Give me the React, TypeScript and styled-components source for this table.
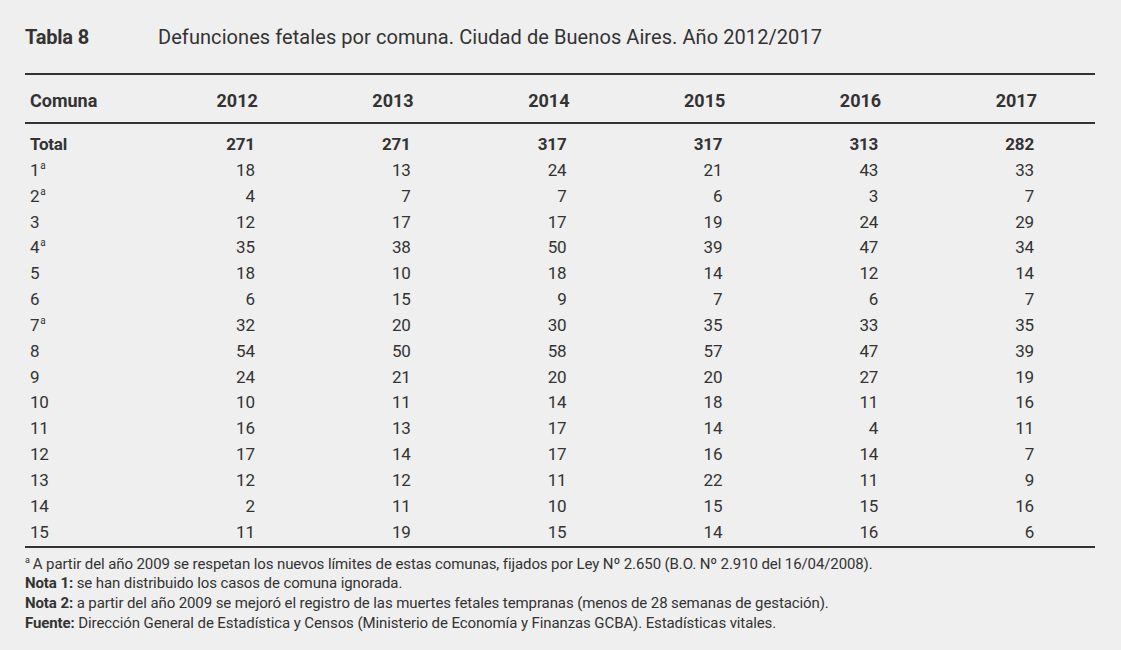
import React from "react";
import styled, { createGlobalStyle } from "styled-components";

const Global = createGlobalStyle`
  html, body { margin: 0; padding: 0; background: #efefef; }
  body { font-family: Roboto, "Open Sans", "Liberation Sans", sans-serif; color: #333; }
`;

const Page = styled.div`
  width: 1070px;
  padding: 24px 26px 0 25px;
  background: #efefef;
  min-height: 650px;
  box-sizing: content-box;
`;

const TitleBar = styled.div`
  display: flex;
  align-items: baseline;
  height: 49px;
  padding-top: 1px;
  box-sizing: border-box;
  font-size: 20px;
`;

const TableNo = styled.span`
  width: 133px;
  font-weight: 700;
  letter-spacing: -0.2px;
`;

const TitleText = styled.span`
  font-weight: 400;
  letter-spacing: 0.07px;
`;

const Table = styled.div`
  display: grid;
  grid-template-columns: 135px repeat(6, 1fr);
  border-top: 2px solid #333;
  border-bottom: 2px solid #333;
`;

const HeadCell = styled.div<{ $first?: boolean }>`
  height: 49px;
  border-bottom: 2px solid #333;
  display: flex;
  align-items: center;
  padding-top: 3px;
  box-sizing: border-box;
  justify-content: ${(p) => (p.$first ? "flex-start" : "flex-end")};
  padding-left: ${(p) => (p.$first ? "5px" : "0")};
  padding-right: ${(p) => (p.$first ? "0" : "58px")};
  font-size: 18px;
  font-weight: 700;
  letter-spacing: 0;
`;

const Cell = styled.div<{ $first?: boolean; $bold?: boolean; $top?: boolean }>`
  height: 25.85px;
  line-height: 25.85px;
  margin-top: ${(p) => (p.$top ? "8px" : "0")};
  text-align: ${(p) => (p.$first ? "left" : "right")};
  padding-left: ${(p) => (p.$first ? "5px" : "0")};
  padding-right: ${(p) => (p.$first ? "0" : "61px")};
  font-size: 17px;
  font-weight: ${(p) => (p.$bold ? 700 : 400)};
  letter-spacing: -0.2px;
`;

const Sup = styled.sup`
  font-size: 10px;
  line-height: 0;
  vertical-align: 7px;
  margin-left: 1px;
`;

const Notes = styled.div`
  padding-top: 7px;
  font-size: 15px;
  line-height: 19.7px;
  letter-spacing: -0.1px;
`;

const NoteLine = styled.div``;

const NoteSup = styled.sup`
  font-size: 9px;
  line-height: 0;
  vertical-align: 6px;
  margin-right: 3px;
`;

const years = ["2012", "2013", "2014", "2015", "2016", "2017"];

const rows: { label: string; sup?: boolean; bold?: boolean; v: number[] }[] = [
  { label: "Total", bold: true, v: [271, 271, 317, 317, 313, 282] },
  { label: "1", sup: true, v: [18, 13, 24, 21, 43, 33] },
  { label: "2", sup: true, v: [4, 7, 7, 6, 3, 7] },
  { label: "3", v: [12, 17, 17, 19, 24, 29] },
  { label: "4", sup: true, v: [35, 38, 50, 39, 47, 34] },
  { label: "5", v: [18, 10, 18, 14, 12, 14] },
  { label: "6", v: [6, 15, 9, 7, 6, 7] },
  { label: "7", sup: true, v: [32, 20, 30, 35, 33, 35] },
  { label: "8", v: [54, 50, 58, 57, 47, 39] },
  { label: "9", v: [24, 21, 20, 20, 27, 19] },
  { label: "10", v: [10, 11, 14, 18, 11, 16] },
  { label: "11", v: [16, 13, 17, 14, 4, 11] },
  { label: "12", v: [17, 14, 17, 16, 14, 7] },
  { label: "13", v: [12, 12, 11, 22, 11, 9] },
  { label: "14", v: [2, 11, 10, 15, 15, 16] },
  { label: "15", v: [11, 19, 15, 14, 16, 6] },
];

export default function App() {
  return (
    <Page>
      <Global />
      <TitleBar>
        <TableNo>Tabla 8</TableNo>
        <TitleText>Defunciones fetales por comuna. Ciudad de Buenos Aires. Año 2012/2017</TitleText>
      </TitleBar>
      <Table>
        <HeadCell $first>Comuna</HeadCell>
        {years.map((y) => (
          <HeadCell key={y}>{y}</HeadCell>
        ))}
        {rows.map((r, i) => (
          <React.Fragment key={r.label}>
            <Cell $first $bold={r.bold} $top={i === 0}>
              {r.label}
              {r.sup && <Sup>a</Sup>}
            </Cell>
            {r.v.map((n, j) => (
              <Cell key={j} $bold={r.bold} $top={i === 0}>
                {n}
              </Cell>
            ))}
          </React.Fragment>
        ))}
      </Table>
      <Notes>
        <NoteLine>
          <NoteSup>a</NoteSup>A partir del año 2009 se respetan los nuevos límites de estas comunas, fijados por Ley Nº 2.650 (B.O. Nº 2.910 del 16/04/2008).
        </NoteLine>
        <NoteLine>
          <b>Nota 1:</b> se han distribuido los casos de comuna ignorada.
        </NoteLine>
        <NoteLine>
          <b>Nota 2:</b> a partir del año 2009 se mejoró el registro de las muertes fetales tempranas (menos de 28 semanas de gestación).
        </NoteLine>
        <NoteLine>
          <b>Fuente:</b> Dirección General de Estadística y Censos (Ministerio de Economía y Finanzas GCBA). Estadísticas vitales.
        </NoteLine>
      </Notes>
    </Page>
  );
}
